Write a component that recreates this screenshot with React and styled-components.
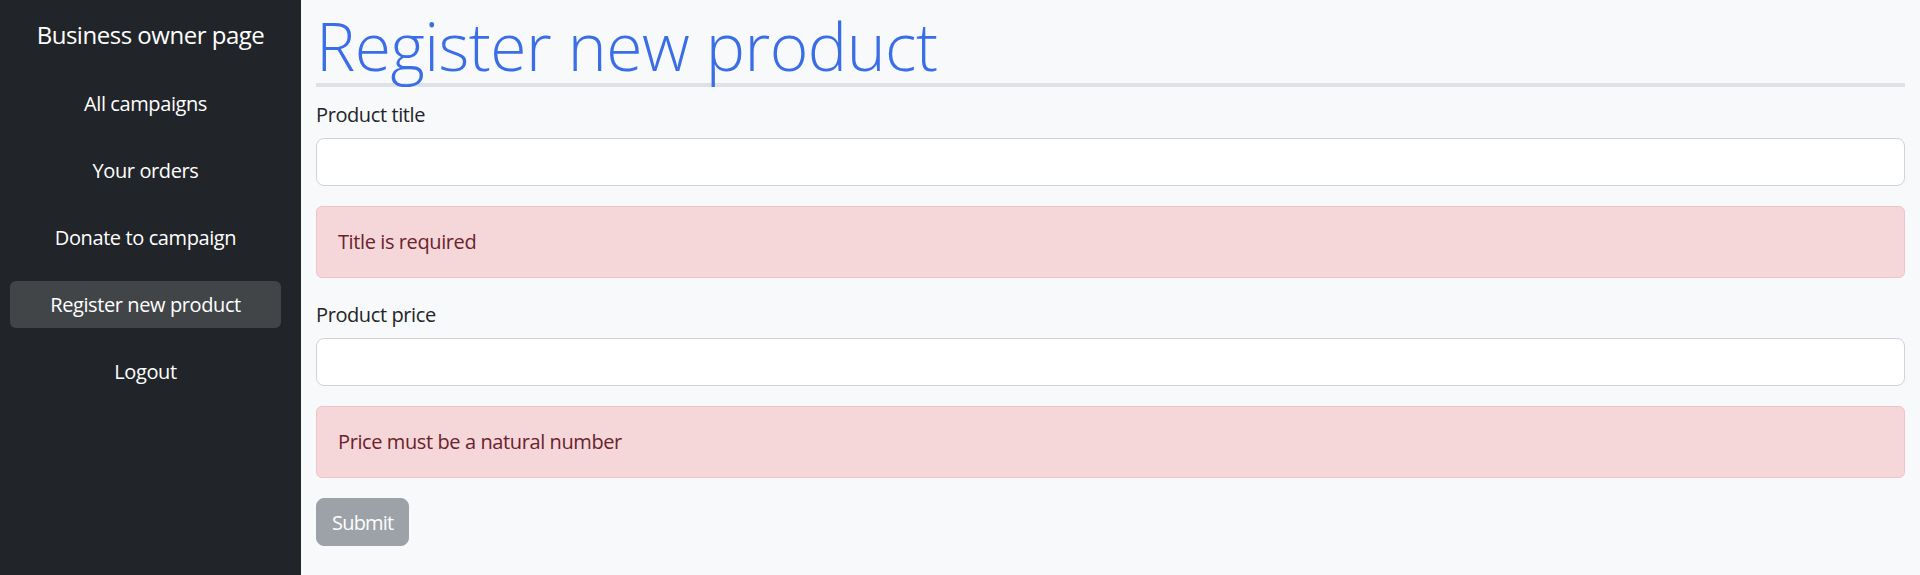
import React from "react";
import styled, { createGlobalStyle } from "styled-components";

const GlobalStyle = createGlobalStyle`
  * { box-sizing: border-box; }
  body {
    margin: 0;
    font-family: "Open Sans", "Liberation Sans", sans-serif;
    color: #212529;
    background: #f8f9fa;
  }
`;

const navItems = [
  "All campaigns",
  "Your orders",
  "Donate to campaign",
  "Register new product",
  "Logout",
];

function App() {
  const active = "Register new product";

  return (
    <>
      <GlobalStyle />
      <Layout>
        <Sidebar>
          <Brand>Business owner page</Brand>
          <Nav>
            {navItems.map((item) => (
              <NavLink key={item} $active={item === active}>
                {item}
              </NavLink>
            ))}
          </Nav>
        </Sidebar>
        <Main>
          <Heading>Register new product</Heading>
          <Form onSubmit={(e) => e.preventDefault()}>
            <Field>
              <Label htmlFor="title">Product title</Label>
              <Input id="title" type="text" />
              <Alert>Title is required</Alert>
            </Field>
            <Field>
              <Label htmlFor="price">Product price</Label>
              <Input id="price" type="text" />
              <Alert>Price must be a natural number</Alert>
            </Field>
            <SubmitButton type="submit" disabled>
              Submit
            </SubmitButton>
          </Form>
        </Main>
      </Layout>
    </>
  );
}

const Layout = styled.div`
  display: flex;
  min-height: 100vh;
`;

const Sidebar = styled.aside`
  width: 301px;
  flex-shrink: 0;
  background: #212529;
  color: #fff;
  padding: 17px 20px 0 10px;
`;

const Brand = styled.div`
  font-size: 24px;
  line-height: 36px;
  text-align: center;
  letter-spacing: -0.02em;
  margin-left: 10px;
`;

const Nav = styled.nav`
  display: flex;
  flex-direction: column;
  gap: 20px;
  margin-top: 27px;
`;

const NavLink = styled.a`
  display: block;
  height: 47px;
  line-height: 47px;
  font-size: 20px;
  text-align: center;
  letter-spacing: -0.02em;
  color: #fff;
  border-radius: 6px;
  background: ${(p) => (p.$active ? "rgba(255, 255, 255, 0.15)" : "transparent")};
  cursor: pointer;
`;

const Main = styled.main`
  flex: 1;
  padding: 0 15px;
  background: #f8f9fa;
`;

const Heading = styled.h1`
  margin: 0;
  padding-top: 8px;
  font-size: 66px;
  font-weight: 300;
  line-height: 75px;
  letter-spacing: -0.008em;
  color: #3a6ee6;
  border-bottom: 4px solid #dee2e6;
`;

const Form = styled.form`
  display: flex;
  flex-direction: column;
  align-items: flex-start;
  gap: 22px;
  margin-top: 13px;
`;

const Field = styled.div`
  display: flex;
  flex-direction: column;
  width: 100%;
`;

const Label = styled.label`
  font-size: 20px;
  line-height: 30px;
  letter-spacing: -0.02em;
  margin-bottom: 8px;
`;

const Input = styled.input`
  width: 100%;
  height: 48px;
  padding: 8px 16px;
  font: inherit;
  font-size: 20px;
  background: #fff;
  border: 1px solid #ced4da;
  border-radius: 8px;
  outline: none;
`;

const Alert = styled.div`
  margin-top: 20px;
  padding: 20px 21px;
  font-size: 20px;
  line-height: 30px;
  letter-spacing: -0.02em;
  color: #6a232a;
  background: #f5d7da;
  border: 1px solid #f1c2c7;
  border-radius: 6px;
`;

const SubmitButton = styled.button`
  margin-top: -2px;
  height: 48px;
  padding: 0 15px;
  font: inherit;
  font-size: 20px;
  letter-spacing: -0.04em;
  color: #fff;
  background: #6c757d;
  border: 1px solid #6c757d;
  border-radius: 8px;

  &:disabled {
    opacity: 0.65;
  }
`;

export default App;
